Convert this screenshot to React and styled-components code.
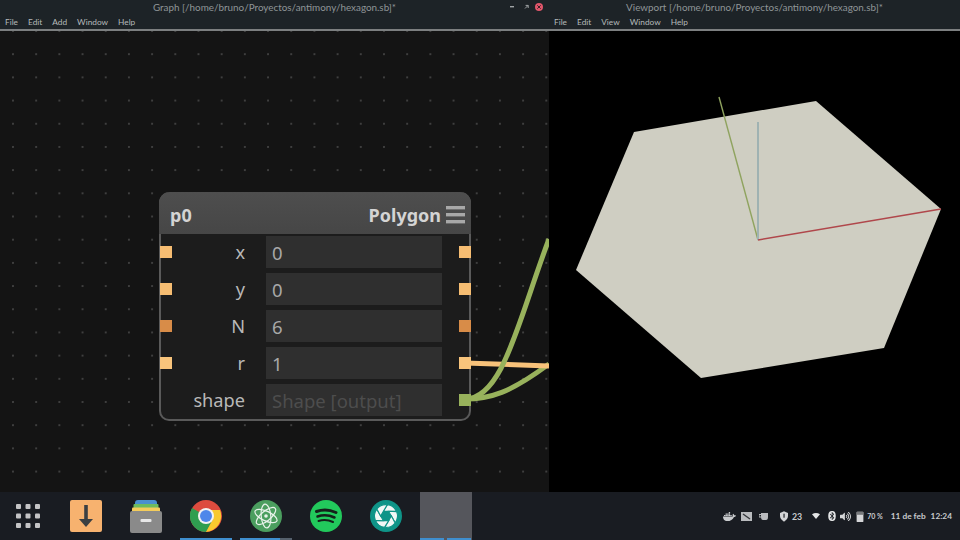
import React from "react"
import styled, { createGlobalStyle } from "styled-components"
import { FaDocker, FaBluetooth, FaVolumeUp } from "react-icons/fa"

const GlobalStyle = createGlobalStyle`
    html, body {
        margin: 0;
        padding: 0;
        width: 960px;
        height: 540px;
        overflow: hidden;
        background: #191c22;
        font-family: "Noto Sans", "Open Sans", sans-serif;
    }
`

const MENU_GRAPH = ["File", "Edit", "Add", "Window", "Help"]
const MENU_VIEW = ["File", "Edit", "View", "Window", "Help"]

const ROWS = [
    { label: "x", value: "0", port: "#f6bd72", hasInput: true },
    { label: "y", value: "0", port: "#f6bd72", hasInput: true },
    { label: "N", value: "6", port: "#d88c48", hasInput: true },
    { label: "r", value: "1", port: "#f8c47c", hasInput: true },
    { label: "shape", value: "Shape [output]", port: "#98b25c", output: true },
]

function MenuIcon() {
    return (
        <svg width="20" height="18" viewBox="0 0 20 18">
            <rect x="0" y="0" width="19" height="3.4" fill="#a8a8a8" />
            <rect x="0" y="7" width="19" height="3.4" fill="#a8a8a8" />
            <rect x="0" y="14" width="19" height="3.4" fill="#a8a8a8" />
        </svg>
    )
}

function WindowButtons() {
    return (
        <Controls>
            <svg width="36" height="12" viewBox="0 0 36 12">
                <rect x="0" y="5" width="4" height="1.4" fill="#a0a4a6" />
                <path d="M15 7.5l3-3M15.6 4.4h2.6v2.6" stroke="#a0a4a6" strokeWidth="1" fill="none" />
                <circle cx="29" cy="6" r="4" fill="#e0566b" />
                <path d="M27.3 4.3l3.4 3.4M30.7 4.3l-3.4 3.4" stroke="#3b1f26" strokeWidth="1" />
            </svg>
        </Controls>
    )
}

function Wires() {
    return (
        <WireLayer viewBox="0 0 549 461">
            <path d="M465 368 C490 368 510 362 549 333" stroke="#98b25c" strokeWidth="5" fill="none" />
            <path d="M465 332 L549 335" stroke="#f8c27a" strokeWidth="5" fill="none" />
            <path d="M465 368 C503 368 518 290 549 208" stroke="#98b25c" strokeWidth="5" fill="none" />
        </WireLayer>
    )
}

function GraphNode() {
    return (
        <Node>
            <NodeHeader>
                <span>p0</span>
                <HeaderRight>
                    <span>Polygon</span>
                    <MenuIcon />
                </HeaderRight>
            </NodeHeader>
            <NodeBody>
                {ROWS.map(r => (
                    <Row key={r.label}>
                        <Port $color={r.hasInput ? r.port : "transparent"} />
                        <Label>{r.label}</Label>
                        <Field $muted={r.output}>{r.value}</Field>
                        <Port $color={r.port} />
                    </Row>
                ))}
            </NodeBody>
        </Node>
    )
}

function Scene() {
    return (
        <SceneSvg viewBox="549 31 411 461">
            <polygon points="816,101 941,209 884,348 701,378 576,270 634,132" fill="#cfcec2" />
            <line x1="719" y1="97" x2="758" y2="240" stroke="#8fa35f" strokeWidth="1.4" />
            <line x1="758" y1="122" x2="758" y2="240" stroke="#9fb2b2" strokeWidth="2" />
            <line x1="758" y1="240" x2="941" y2="209" stroke="#b0474b" strokeWidth="1.4" />
        </SceneSvg>
    )
}

function GridIcon() {
    const cells = []
    for (let y = 0; y < 3; y++) {
        for (let x = 0; x < 3; x++) {
            cells.push(<rect key={x + "-" + y} x={x * 9.5} y={y * 9.5} width="5" height="5" rx="1" fill="#c4c4c6" />)
        }
    }
    return <GridSvg viewBox="0 0 24 24">{cells}</GridSvg>
}

function DownloadIcon() {
    return (
        <svg width="32" height="32" viewBox="0 0 32 32">
            <rect width="32" height="32" rx="2" fill="#f7b26f" />
            <rect x="14.2" y="5" width="3.6" height="16" fill="#3b3f42" />
            <path d="M9 19h14l-7 8z" fill="#3b3f42" />
        </svg>
    )
}

function ArchiveIcon() {
    return (
        <svg width="32" height="33" viewBox="0 0 32 33">
            <path d="M5 3q0-3 3-3h16q3 0 3 3v4H5z" fill="#4a8fd0" />
            <rect x="3.5" y="4" width="25" height="5" rx="1" fill="#6dbb5f" />
            <rect x="2" y="7.5" width="28" height="5" rx="1" fill="#f3cc5c" />
            <rect x="0" y="11" width="32" height="22" rx="2" fill="#8a8a8a" />
            <rect x="10.5" y="19" width="11" height="3" rx="1" fill="#e8e8e8" />
        </svg>
    )
}

function ChromeIcon() {
    return (
        <svg width="32" height="32" viewBox="0 0 32 32">
            <circle cx="16" cy="16" r="16" fill="#dd4b3e" />
            <path d="M16 16 L2.1 8 A16 16 0 0 0 16 32 L24 18z" fill="#2f9e50" />
            <path d="M16 10 H30 A16 16 0 0 1 16 32 L23 19z" fill="#f8c92e" />
            <circle cx="16" cy="16" r="8" fill="#f2f2f2" />
            <circle cx="16" cy="16" r="6" fill="#4f87ea" />
        </svg>
    )
}

function AtomIcon() {
    return (
        <svg width="32" height="32" viewBox="0 0 32 32">
            <circle cx="16" cy="16" r="16" fill="#4b9e5f" />
            <g fill="none" stroke="#e8f2ea" strokeWidth="1.2">
                <ellipse cx="16" cy="16" rx="12" ry="4.8" transform="rotate(25 16 16)" />
                <ellipse cx="16" cy="16" rx="12" ry="4.8" transform="rotate(-40 16 16)" />
                <ellipse cx="16" cy="16" rx="12" ry="4.8" transform="rotate(85 16 16)" />
            </g>
            <circle cx="16" cy="16" r="1.8" fill="#e8f2ea" />
        </svg>
    )
}

function SpotifyIcon() {
    return (
        <svg width="32" height="32" viewBox="0 0 32 32">
            <circle cx="16" cy="16" r="16" fill="#22c95c" />
            <g fill="none" stroke="#15201a" strokeLinecap="round">
                <path d="M6.5 11.5 Q16 8 26 12.5" strokeWidth="3" />
                <path d="M7.5 16.5 Q16 13.5 24.5 17.5" strokeWidth="2.5" />
                <path d="M8.5 21 Q16 18.8 23 22" strokeWidth="2" />
            </g>
        </svg>
    )
}

function ShutterIcon() {
    const blades = [0, 60, 120, 180, 240, 300]
    return (
        <svg width="32" height="32" viewBox="0 0 32 32">
            <circle cx="16" cy="16" r="16" fill="#0f9488" />
            {blades.map(a => (
                <path
                    key={a}
                    d="M13.2 11.4 L26.4 11.4 A11.5 11.5 0 0 0 17.5 4.6 Z"
                    fill="#f2f7f6"
                    stroke="#0f9488"
                    strokeWidth="1.1"
                    transform={`rotate(${a} 16 16)`}
                />
            ))}
        </svg>
    )
}

function TrayIcons() {
    return (
        <>
            <TraySlot $left={0}><FaDocker size={13} color="#c9cbce" /></TraySlot>
            <TraySlot $left={5}>
                <svg width="11" height="9" viewBox="0 0 11 9">
                    <rect width="11" height="9" fill="#b9bbbe" />
                    <path d="M2 2l7 5" stroke="#33363a" strokeWidth="1.4" />
                </svg>
            </TraySlot>
            <TraySlot $left={7}>
                <svg width="9" height="7" viewBox="0 0 9 7">
                    <path d="M2 0h7v4q0 3-2 3H4Q2 7 2 4z" fill="#b9bbbe" />
                    <path d="M2 1.5H0V4h2" fill="none" stroke="#b9bbbe" />
                </svg>
            </TraySlot>
            <TraySlot $left={12}>
                <svg width="8" height="11" viewBox="0 0 10 13">
                    <path d="M5 0l5 2v4q0 4-5 7Q0 10 0 6V2z" fill="#d4d5d7" />
                    <rect x="4.3" y="3" width="1.5" height="5" fill="#23262b" />
                </svg>
            </TraySlot>
            <TrayText $left={4}>23</TrayText>
            <TraySlot $left={10}>
                <svg width="8" height="6" viewBox="0 0 12 9">
                    <path d="M0 2Q6-2 12 2L6 9z" fill="#e4e5e6" />
                </svg>
            </TraySlot>
            <TraySlot $left={7}><FaBluetooth size={10} color="#e4e5e6" /></TraySlot>
            <TraySlot $left={3}><FaVolumeUp size={11} color="#d4d5d7" /></TraySlot>
            <TraySlot $left={5}>
                <svg width="8" height="11" viewBox="0 0 8 13">
                    <rect x="0" y="1" width="8" height="12" rx="1" fill="#d4d5d7" />
                    <rect x="0" y="1" width="8" height="3.5" fill="#77797c" />
                </svg>
            </TraySlot>
            <TrayPercent>70 %</TrayPercent>
        </>
    )
}

export default function App() {
    return (
        <>
            <GlobalStyle />
            <Screen>
                <Windows>
                    <GraphWindow>
                        <TitleBar>
                            <TitleRow>
                                Graph [/home/bruno/Proyectos/antimony/hexagon.sb]*
                                <WindowButtons />
                            </TitleRow>
                            <MenuBar>
                                {MENU_GRAPH.map(m => <MenuItem key={m}>{m}</MenuItem>)}
                            </MenuBar>
                        </TitleBar>
                        <GraphCanvas>
                            <Wires />
                            <GraphNode />
                        </GraphCanvas>
                    </GraphWindow>
                    <ViewWindow>
                        <TitleBar>
                            <TitleRow>Viewport [/home/bruno/Proyectos/antimony/hexagon.sb]*</TitleRow>
                            <MenuBar>
                                {MENU_VIEW.map(m => <MenuItem key={m}>{m}</MenuItem>)}
                            </MenuBar>
                        </TitleBar>
                        <ViewCanvas>
                            <Scene />
                        </ViewCanvas>
                    </ViewWindow>
                </Windows>
                <Dock>
                    <DockItems>
                        <DockItem><GridIcon /></DockItem>
                        <DockItem><DownloadIcon /></DockItem>
                        <DockItem><ArchiveIcon /></DockItem>
                        <DockItem $running={1}><ChromeIcon /></DockItem>
                        <DockItem $running={1} $extra><AtomIcon /></DockItem>
                        <DockItem><SpotifyIcon /></DockItem>
                        <DockItem><ShutterIcon /></DockItem>
                        <DockItem $running={2} $active />
                    </DockItems>
                    <Tray>
                        <TrayIcons />
                        <Clock $left={8}>11 de feb</Clock>
                        <Clock $left={5}>12:24</Clock>
                    </Tray>
                </Dock>
            </Screen>
        </>
    )
}

const Screen = styled.div`
    width: 960px;
    height: 540px;
    display: flex;
    flex-direction: column;
    overflow: hidden;
`

const Windows = styled.div`
    display: flex;
    height: 492px;
`

const GraphWindow = styled.section`
    width: 549px;
    display: flex;
    flex-direction: column;
`

const ViewWindow = styled.section`
    width: 411px;
    display: flex;
    flex-direction: column;
`

const TitleBar = styled.header`
    height: 29px;
    flex: none;
    background: #1d2327;
    border-bottom: 2px solid #7c7f80;
    display: flex;
    flex-direction: column;
`

const TitleRow = styled.div`
    position: relative;
    height: 15px;
    line-height: 15px;
    text-align: center;
    font-family: "Lato", "Noto Sans", sans-serif;
    font-size: 9.9px;
    color: #8f9597;
    white-space: nowrap;
`

const Controls = styled.div`
    position: absolute;
    right: 3px;
    top: 1px;
    height: 12px;
    display: flex;
`

const MenuBar = styled.nav`
    display: flex;
    gap: 10px;
    padding-left: 5px;
    height: 14px;
    align-items: center;
`

const MenuItem = styled.span`
    font-family: "Lato", "Noto Sans", sans-serif;
    font-size: 8.3px;
    color: #b4b9ba;
`

const GraphCanvas = styled.div`
    position: relative;
    flex: 1;
    background-color: #141414;
    background-image: radial-gradient(circle, #5a5a5a 0, #4a4a4a 0.6px, transparent 1px);
    background-size: 23.2px 23.2px;
    background-position: 1.4px -11.6px;
    overflow: hidden;
`

const WireLayer = styled.svg`
    position: absolute;
    inset: 0;
    width: 549px;
    height: 461px;
`

const Node = styled.div`
    position: absolute;
    left: 159px;
    top: 161px;
    width: 312px;
    height: 229px;
    box-sizing: border-box;
    border: 2px solid #5a5a5a;
    border-top: 0;
    border-radius: 11px 11px 10px 10px;
    background: #1c1c1c;
    display: flex;
    flex-direction: column;
`

const NodeHeader = styled.div`
    height: 42px;
    margin: 0 -2px;
    flex: none;
    padding: 4px 5px 0 11px;
    box-sizing: border-box;
    border-radius: 11px 11px 0 0;
    background: linear-gradient(#4e4e4e, #464646);
    display: flex;
    align-items: center;
    justify-content: space-between;
    color: #d4d4d4;
    font-size: 18px;
    font-weight: 700;
`

const HeaderRight = styled.div`
    display: flex;
    align-items: center;
    gap: 5px;
`

const NodeBody = styled.div`
    display: flex;
    flex-direction: column;
    gap: 5px;
    padding-top: 2px;
`

const Row = styled.div`
    height: 32px;
    display: flex;
    align-items: center;
    margin: 0 -1px;
`

const Port = styled.i`
    display: block;
    flex: none;
    width: 12px;
    height: 12px;
    background: ${p => p.$color};
`

const Label = styled.div`
    width: 73px;
    text-align: right;
    flex: none;
    font-size: 18.2px;
    color: #b8b8b8;
    line-height: 33px;
    height: 32px;
`

const Field = styled.div`
    width: 176px;
    height: 32px;
    flex: none;
    margin: 0 17px 0 21px;
    padding-left: 6px;
    box-sizing: border-box;
    background: #2f2f2f;
    color: ${p => (p.$muted ? "#4d4d4d" : "#a8a8a8")};
    font-size: 18.5px;
    line-height: 33px;
    white-space: nowrap;
`

const ViewCanvas = styled.div`
    flex: 1;
    background: #000;
`

const SceneSvg = styled.svg`
    display: block;
    width: 411px;
    height: 461px;
`

const Dock = styled.footer`
    height: 48px;
    flex: none;
    background: #191c22;
    display: flex;
    justify-content: space-between;
`

const DockItems = styled.div`
    display: flex;
    gap: 8px;
`

const DockItem = styled.div`
    position: relative;
    width: 52px;
    height: 48px;
    display: flex;
    align-items: center;
    justify-content: center;
    background: ${p => (p.$active ? "#55565c" : "transparent")};

    &::after {
        content: "";
        display: ${p => (p.$running ? "block" : "none")};
        position: absolute;
        left: 0;
        bottom: 0;
        width: ${p => (p.$extra ? "40px" : p.$running === 2 ? "24px" : "52px")};
        height: 2px;
        background: #3f8fcf;
        box-shadow: ${p => (p.$running === 2 ? "27px 0 0 #3f8fcf" : p.$extra ? "12px 0 0 #55606c" : "none")};
    }
`

const GridSvg = styled.svg`
    width: 24px;
    height: 24px;
    margin-left: 4px;
`

const Tray = styled.div`
    display: flex;
    align-items: center;
    padding: 0 8px 0 0;
    color: #c9cbce;
    font-family: "Lato", "Noto Sans", sans-serif;
`

const TraySlot = styled.span`
    display: flex;
    align-items: center;
    margin-left: ${p => p.$left}px;
`

const TrayText = styled.span`
    font-size: 8.8px;
    font-weight: 700;
    margin-left: ${p => p.$left}px;
`

const TrayPercent = styled.span`
    font-size: 7px;
    font-weight: 700;
    margin-left: 3px;
`

const Clock = styled.span`
    font-size: 8.3px;
    font-weight: 700;
    white-space: nowrap;
    margin-left: ${p => p.$left}px;
`
